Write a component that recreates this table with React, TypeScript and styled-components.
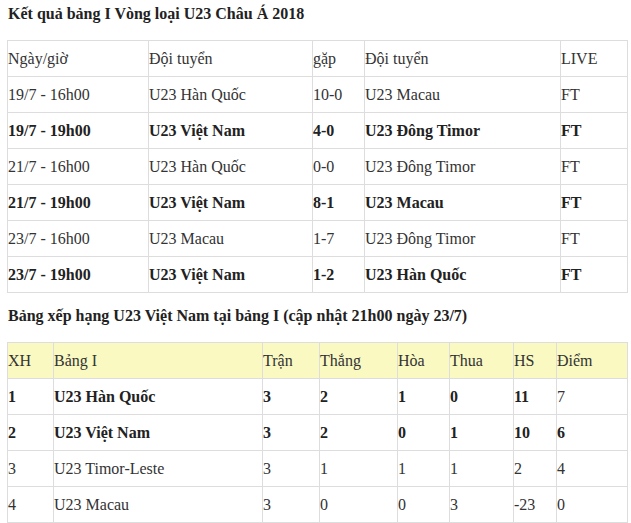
import styled, { createGlobalStyle } from "styled-components";

const GlobalStyle = createGlobalStyle`
  body {
    margin: 0;
    background: #fff;
    font-family: "Liberation Serif", "Times New Roman", serif;
    color: #333;
  }
`;

const Page = styled.div`
  padding: 0 4px 0 7px;
  width: 620px;
`;

const Heading = styled.h3<{ $top: number; $bottom: number }>`
  margin: 0;
  padding: ${(p) => p.$top}px 0 ${(p) => p.$bottom}px 1px;
  font-size: 16px;
  line-height: 20px;
  font-weight: bold;
  color: #222;
`;

const Table = styled.table`
  width: 620px;
  border-collapse: collapse;
  table-layout: fixed;
  font-size: 16px;
`;

const Row = styled.tr<{ $bold?: boolean; $head?: boolean }>`
  background: ${(p) => (p.$head ? "#f9f9c1" : "#fff")};
  font-weight: ${(p) => (p.$bold ? "bold" : "normal")};
  color: ${(p) => (p.$bold ? "#222" : "#333")};
`;

const Cell = styled.td<{ $light?: boolean }>`
  height: 35px;
  padding: 0;
  border: 1px solid #ddd;
  vertical-align: middle;
  white-space: nowrap;
  font-weight: ${(p) => (p.$light ? "normal" : "inherit")};
  color: ${(p) => (p.$light ? "#333" : "inherit")};
`;

type Match = [string, string, string, string, string, boolean];

const matches: Match[] = [
  ["19/7 - 16h00", "U23 Hàn Quốc", "10-0", "U23 Macau", "FT", false],
  ["19/7 - 19h00", "U23 Việt Nam", "4-0", "U23 Đông Timor", "FT", true],
  ["21/7 - 16h00", "U23 Hàn Quốc", "0-0", "U23 Đông Timor", "FT", false],
  ["21/7 - 19h00", "U23 Việt Nam", "8-1", "U23 Macau", "FT", true],
  ["23/7 - 16h00", "U23 Macau", "1-7", "U23 Đông Timor", "FT", false],
  ["23/7 - 19h00", "U23 Việt Nam", "1-2", "U23 Hàn Quốc", "FT", true],
];

type Standing = { cells: string[]; bold: boolean; lightLast?: boolean };

const standings: Standing[] = [
  { cells: ["1", "U23 Hàn Quốc", "3", "2", "1", "0", "11", "7"], bold: true, lightLast: true },
  { cells: ["2", "U23 Việt Nam", "3", "2", "0", "1", "10", "6"], bold: true },
  { cells: ["3", "U23 Timor-Leste", "3", "1", "1", "1", "2", "4"], bold: false },
  { cells: ["4", "U23 Macau", "3", "0", "0", "3", "-23", "0"], bold: false },
];

const matchCols = [141, 164, 52, 196, 67];
const standingCols = [46, 209, 57, 78, 52, 64, 43, 71];

export default function App() {
  return (
    <>
      <GlobalStyle />
      <Page>
        <Heading $top={4} $bottom={16}>
          Kết quả bảng I Vòng loại U23 Châu Á 2018
        </Heading>
        <Table>
          <colgroup>
            {matchCols.map((w, i) => (
              <col key={i} style={{ width: w }} />
            ))}
          </colgroup>
          <tbody>
            <Row>
              <Cell>Ngày/giờ</Cell>
              <Cell>Đội tuyển</Cell>
              <Cell>gặp</Cell>
              <Cell>Đội tuyển</Cell>
              <Cell>LIVE</Cell>
            </Row>
            {matches.map((m, i) => (
              <Row key={i} $bold={m[5]}>
                {m.slice(0, 5).map((c, j) => (
                  <Cell key={j}>{c}</Cell>
                ))}
              </Row>
            ))}
          </tbody>
        </Table>
        <Heading $top={13} $bottom={16}>
          Bảng xếp hạng U23 Việt Nam tại bảng I (cập nhật 21h00 ngày 23/7)
        </Heading>
        <Table>
          <colgroup>
            {standingCols.map((w, i) => (
              <col key={i} style={{ width: w }} />
            ))}
          </colgroup>
          <tbody>
            <Row $head>
              {["XH", "Bảng I", "Trận", "Thắng", "Hòa", "Thua", "HS", "Điểm"].map((h) => (
                <Cell key={h}>{h}</Cell>
              ))}
            </Row>
            {standings.map((s, i) => (
              <Row key={i} $bold={s.bold}>
                {s.cells.map((c, j) => (
                  <Cell key={j} $light={s.lightLast && j === s.cells.length - 1}>
                    {c}
                  </Cell>
                ))}
              </Row>
            ))}
          </tbody>
        </Table>
      </Page>
    </>
  );
}
